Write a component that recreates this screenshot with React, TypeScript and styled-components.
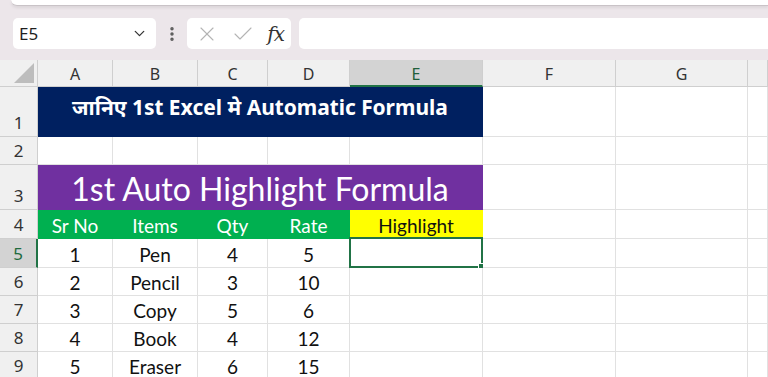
import React from 'react';
import styled, {createGlobalStyle} from 'styled-components';
import {Check, ChevronDown, EllipsisVertical, X} from 'lucide-react';

const GlobalStyle = createGlobalStyle`
  html, body {
    margin: 0;
    padding: 0;
    background: #ece6ea;
    overflow: hidden;
  }
  * {
    box-sizing: border-box;
  }
`;

const GREEN_SEL = '#217346';
const GRID = '#e1e1e1';
const HEAD_LINE = '#cfcfcf';

const COLS = ['A', 'B', 'C', 'D', 'E', 'F', 'G', ''];
const COL_WIDTHS = [75, 85, 70, 82, 133, 133, 132];

type Variant = 'plain' | 'title' | 'banner' | 'head' | 'yellow';

interface CellDef {
  text?: string;
  span?: number;
  variant?: Variant;
  selected?: boolean;
}

interface RowDef {
  num: number;
  height: number;
  cells: CellDef[];
}

const blank = (n: number): CellDef[] => Array.from({length: n}, () => ({}));

const ROWS: RowDef[] = [
  {
    num: 1,
    height: 50,
    cells: [{text: 'जानिए 1st Excel मे Automatic Formula', span: 5, variant: 'title'}, ...blank(3)],
  },
  {num: 2, height: 28, cells: blank(8)},
  {
    num: 3,
    height: 45,
    cells: [{text: '1st Auto Highlight Formula', span: 5, variant: 'banner'}, ...blank(3)],
  },
  {
    num: 4,
    height: 29,
    cells: [
      {text: 'Sr No', variant: 'head'},
      {text: 'Items', variant: 'head'},
      {text: 'Qty', variant: 'head'},
      {text: 'Rate', variant: 'head'},
      {text: 'Highlight', variant: 'yellow'},
      ...blank(3),
    ],
  },
  {num: 5, height: 29, cells: [{text: '1'}, {text: 'Pen'}, {text: '4'}, {text: '5'}, {selected: true}, ...blank(3)]},
  {num: 6, height: 28, cells: [{text: '2'}, {text: 'Pencil'}, {text: '3'}, {text: '10'}, ...blank(4)]},
  {num: 7, height: 28, cells: [{text: '3'}, {text: 'Copy'}, {text: '5'}, {text: '6'}, ...blank(4)]},
  {num: 8, height: 28, cells: [{text: '4'}, {text: 'Book'}, {text: '4'}, {text: '12'}, ...blank(4)]},
  {num: 9, height: 28, cells: [{text: '5'}, {text: 'Eraser'}, {text: '6'}, {text: '15'}, ...blank(4)]},
];

const VARIANTS: Record<Variant, {bg: string; color: string; size: number; weight: number; font: string}> = {
  plain: {bg: '#ffffff', color: '#111111', size: 19, weight: 400, font: 'Lato'},
  title: {bg: '#002060', color: '#ffffff', size: 21, weight: 700, font: '"Noto Sans Devanagari", "Noto Sans", Lato'},
  banner: {bg: '#7030a0', color: '#ffffff', size: 32, weight: 400, font: 'Lato'},
  head: {bg: '#00b050', color: '#ffffff', size: 19, weight: 400, font: 'Lato'},
  yellow: {bg: '#ffff00', color: '#111111', size: 19, weight: 400, font: 'Lato'},
};

const Page = styled.div`
  display: flex;
  flex-direction: column;
  height: 377px;
  overflow: hidden;
`;

const TopStrip = styled.div`
  flex-shrink: 0;
  height: 6px;
  margin-left: 11px;
  background: #ffffff;
  border-bottom: 1px solid #c9c3c7;
  border-radius: 0 0 0 9px;
  box-shadow: 0 2px 3px rgba(0, 0, 0, 0.07);
`;

const FormulaBar = styled.div`
  flex-shrink: 0;
  display: flex;
  align-items: center;
  height: 54px;
  padding: 12px 0 11px 13px;
`;

const Box = styled.div`
  display: flex;
  align-items: center;
  height: 31px;
  background: #ffffff;
  border-radius: 5px;
`;

const NameBox = styled(Box)`
  width: 143px;
  justify-content: space-between;
  padding: 0 8px 0 6px;
  font-family: 'Noto Sans', 'Open Sans', sans-serif;
  font-size: 17px;
  color: #1f1f1f;
`;

const Grip = styled.div`
  display: flex;
  justify-content: center;
  width: 31px;
  color: #5a5a5a;
`;

const ActionBox = styled(Box)`
  width: 104px;
  justify-content: space-between;
  padding: 0 7px 0 8px;
`;

const Fx = styled.span`
  font-family: 'DejaVu Serif', 'Liberation Serif', serif;
  font-style: italic;
  font-weight: 500;
  font-size: 20px;
  color: #333333;
  letter-spacing: -1px;
`;

const FormulaInput = styled(Box)`
  flex: 1;
  margin-left: 8px;
  border-radius: 5px 0 0 5px;
`;

const Sheet = styled.div`
  flex: 1;
  display: grid;
  grid-template-columns: 38px ${COL_WIDTHS.map((w) => `${w}px`).join(' ')} 1fr;
  grid-auto-rows: min-content;
  background: #ffffff;
`;

const Corner = styled.div`
  height: 27px;
  background: #f0f0f0;
  border-right: 1px solid ${HEAD_LINE};
  border-bottom: 1px solid ${HEAD_LINE};
  display: flex;
  align-items: flex-end;
  justify-content: flex-end;
  padding: 0 3px 3px 0;
`;

const ColHead = styled.div<{$active?: boolean}>`
  height: 27px;
  display: flex;
  align-items: center;
  justify-content: center;
  padding-top: 2px;
  background: ${(p) => (p.$active ? '#d3d3d3' : '#f0f0f0')};
  border-right: 1px solid ${HEAD_LINE};
  border-bottom: ${(p) => (p.$active ? `2px solid ${GREEN_SEL}` : `1px solid ${HEAD_LINE}`)};
  font-family: 'Noto Sans', 'Open Sans', sans-serif;
  font-size: 16px;
  color: ${(p) => (p.$active ? '#1f5f3a' : '#333333')};
`;

const RowHead = styled.div<{$active?: boolean; $h: number}>`
  height: ${(p) => p.$h}px;
  display: flex;
  align-items: flex-end;
  justify-content: center;
  padding-bottom: 1px;
  background: ${(p) => (p.$active ? '#d3d3d3' : '#f0f0f0')};
  border-right: ${(p) => (p.$active ? `2px solid ${GREEN_SEL}` : `1px solid ${HEAD_LINE}`)};
  border-bottom: 1px solid ${HEAD_LINE};
  font-family: 'Noto Sans', 'Open Sans', sans-serif;
  font-size: 17px;
  line-height: 25px;
  color: ${(p) => (p.$active ? '#1f6b3e' : '#333333')};
`;

const Cell = styled.div<{$variant: Variant; $span: number; $h: number}>`
  position: relative;
  grid-column: span ${(p) => p.$span};
  height: ${(p) => p.$h}px;
  display: flex;
  align-items: center;
  justify-content: center;
  white-space: nowrap;
  background: ${(p) => VARIANTS[p.$variant].bg};
  color: ${(p) => VARIANTS[p.$variant].color};
  font-family: ${(p) => VARIANTS[p.$variant].font}, sans-serif;
  font-size: ${(p) => VARIANTS[p.$variant].size}px;
  font-weight: ${(p) => VARIANTS[p.$variant].weight};
  border-right: 1px solid ${(p) => (p.$variant === 'plain' ? GRID : VARIANTS[p.$variant].bg)};
  border-bottom: 1px solid ${(p) => (p.$variant === 'plain' ? GRID : VARIANTS[p.$variant].bg)};
  padding-top: ${(p) => (p.$variant === 'title' ? 0 : 2)}px;
  padding-bottom: ${(p) => (p.$variant === 'title' ? 4 : 0)}px;
`;

const Selection = styled.div`
  position: absolute;
  top: -2px;
  left: -1px;
  right: -1px;
  bottom: -1px;
  border: 2px solid ${GREEN_SEL};
  pointer-events: none;
`;

const Handle = styled.div`
  position: absolute;
  right: -4px;
  bottom: -4px;
  width: 7px;
  height: 7px;
  background: ${GREEN_SEL};
  border: 1px solid #ffffff;
`;

const CornerTriangle = () => (
  <svg width="20" height="20" viewBox="0 0 20 20">
    <polygon points="20,0 20,20 0,20" fill="#bdbdbd" />
  </svg>
);

const App = () => {
  return (
    <Page>
      <GlobalStyle />
      <TopStrip />
      <FormulaBar>
        <NameBox>
          <span>E5</span>
          <ChevronDown size={17} strokeWidth={1.8} color="#333" />
        </NameBox>
        <Grip>
          <EllipsisVertical size={18} strokeWidth={2.6} />
        </Grip>
        <ActionBox>
          <X size={24} strokeWidth={1.1} color="#b4b4b4" />
          <Check size={24} strokeWidth={1.1} color="#b4b4b4" />
          <Fx>fx</Fx>
        </ActionBox>
        <FormulaInput />
      </FormulaBar>
      <Sheet>
        <Corner>
          <CornerTriangle />
        </Corner>
        {COLS.map((c, i) => (
          <ColHead key={i} $active={c === 'E'}>
            {c}
          </ColHead>
        ))}
        {ROWS.map((row) => (
          <React.Fragment key={row.num}>
            <RowHead $h={row.height} $active={row.num === 5}>
              {row.num}
            </RowHead>
            {row.cells.map((cell, i) => (
              <Cell key={i} $variant={cell.variant ?? 'plain'} $span={cell.span ?? 1} $h={row.height}>
                {cell.text}
                {cell.selected && (
                  <Selection>
                    <Handle />
                  </Selection>
                )}
              </Cell>
            ))}
          </React.Fragment>
        ))}
      </Sheet>
    </Page>
  );
};

export default App;
